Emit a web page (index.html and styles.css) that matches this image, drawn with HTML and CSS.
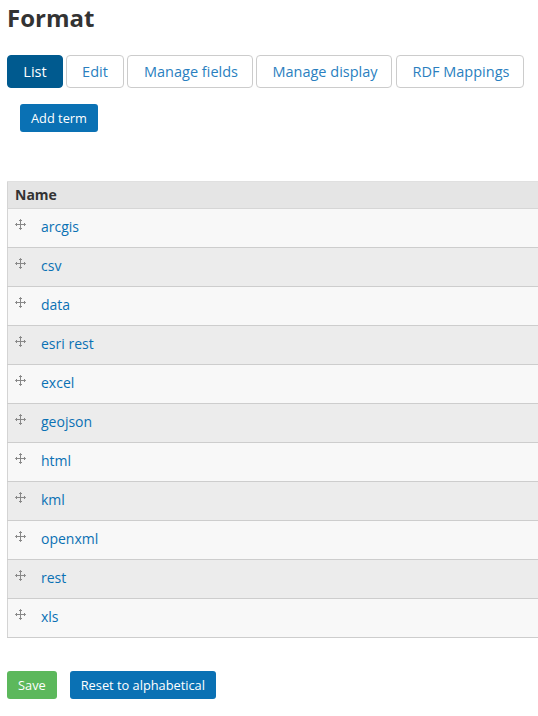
FILE: index.html
```
<!DOCTYPE html>
<html>
<head>
<meta charset="utf-8">
<link rel="stylesheet" href="styles.css">
</head>
<body>
<div class="page">
  <h1 class="title">Format</h1>
  <nav class="tabs">
    <a class="tab active">List</a>
    <a class="tab">Edit</a>
    <a class="tab">Manage fields</a>
    <a class="tab">Manage display</a>
    <a class="tab">RDF Mappings</a>
  </nav>
  <div class="actions">
    <a class="btn btn-primary">Add term</a>
  </div>
  <div class="table-wrap">
    <table class="terms">
      <thead><tr><th>Name</th></tr></thead>
      <tbody>
        <tr><td><span class="drag"><svg width="11" height="11" viewBox="0 0 11 11"><path d="M5.5 0.5v10M0.5 5.5h10M4 2l1.5-1.5L7 2M4 9l1.5 1.5L7 9M2 4L0.5 5.5 2 7M9 4l1.5 1.5L9 7" fill="none" stroke="#888" stroke-width="1"/></svg></span><a>arcgis</a></td></tr>
        <tr><td><span class="drag"><svg width="11" height="11" viewBox="0 0 11 11"><path d="M5.5 0.5v10M0.5 5.5h10M4 2l1.5-1.5L7 2M4 9l1.5 1.5L7 9M2 4L0.5 5.5 2 7M9 4l1.5 1.5L9 7" fill="none" stroke="#888" stroke-width="1"/></svg></span><a>csv</a></td></tr>
        <tr><td><span class="drag"><svg width="11" height="11" viewBox="0 0 11 11"><path d="M5.5 0.5v10M0.5 5.5h10M4 2l1.5-1.5L7 2M4 9l1.5 1.5L7 9M2 4L0.5 5.5 2 7M9 4l1.5 1.5L9 7" fill="none" stroke="#888" stroke-width="1"/></svg></span><a>data</a></td></tr>
        <tr><td><span class="drag"><svg width="11" height="11" viewBox="0 0 11 11"><path d="M5.5 0.5v10M0.5 5.5h10M4 2l1.5-1.5L7 2M4 9l1.5 1.5L7 9M2 4L0.5 5.5 2 7M9 4l1.5 1.5L9 7" fill="none" stroke="#888" stroke-width="1"/></svg></span><a>esri rest</a></td></tr>
        <tr><td><span class="drag"><svg width="11" height="11" viewBox="0 0 11 11"><path d="M5.5 0.5v10M0.5 5.5h10M4 2l1.5-1.5L7 2M4 9l1.5 1.5L7 9M2 4L0.5 5.5 2 7M9 4l1.5 1.5L9 7" fill="none" stroke="#888" stroke-width="1"/></svg></span><a>excel</a></td></tr>
        <tr><td><span class="drag"><svg width="11" height="11" viewBox="0 0 11 11"><path d="M5.5 0.5v10M0.5 5.5h10M4 2l1.5-1.5L7 2M4 9l1.5 1.5L7 9M2 4L0.5 5.5 2 7M9 4l1.5 1.5L9 7" fill="none" stroke="#888" stroke-width="1"/></svg></span><a>geojson</a></td></tr>
        <tr><td><span class="drag"><svg width="11" height="11" viewBox="0 0 11 11"><path d="M5.5 0.5v10M0.5 5.5h10M4 2l1.5-1.5L7 2M4 9l1.5 1.5L7 9M2 4L0.5 5.5 2 7M9 4l1.5 1.5L9 7" fill="none" stroke="#888" stroke-width="1"/></svg></span><a>html</a></td></tr>
        <tr><td><span class="drag"><svg width="11" height="11" viewBox="0 0 11 11"><path d="M5.5 0.5v10M0.5 5.5h10M4 2l1.5-1.5L7 2M4 9l1.5 1.5L7 9M2 4L0.5 5.5 2 7M9 4l1.5 1.5L9 7" fill="none" stroke="#888" stroke-width="1"/></svg></span><a>kml</a></td></tr>
        <tr><td><span class="drag"><svg width="11" height="11" viewBox="0 0 11 11"><path d="M5.5 0.5v10M0.5 5.5h10M4 2l1.5-1.5L7 2M4 9l1.5 1.5L7 9M2 4L0.5 5.5 2 7M9 4l1.5 1.5L9 7" fill="none" stroke="#888" stroke-width="1"/></svg></span><a>openxml</a></td></tr>
        <tr><td><span class="drag"><svg width="11" height="11" viewBox="0 0 11 11"><path d="M5.5 0.5v10M0.5 5.5h10M4 2l1.5-1.5L7 2M4 9l1.5 1.5L7 9M2 4L0.5 5.5 2 7M9 4l1.5 1.5L9 7" fill="none" stroke="#888" stroke-width="1"/></svg></span><a>rest</a></td></tr>
        <tr><td><span class="drag"><svg width="11" height="11" viewBox="0 0 11 11"><path d="M5.5 0.5v10M0.5 5.5h10M4 2l1.5-1.5L7 2M4 9l1.5 1.5L7 9M2 4L0.5 5.5 2 7M9 4l1.5 1.5L9 7" fill="none" stroke="#888" stroke-width="1"/></svg></span><a>xls</a></td></tr>
      </tbody>
    </table>
  </div>
  <div class="form-actions">
    <a class="btn btn-success">Save</a>
    <a class="btn btn-primary">Reset to alphabetical</a>
  </div>
</div>
</body>
</html>
```
FILE: styles.css
```
html, body {
  margin: 0;
  padding: 0;
}
body {
  font-family: "Open Sans", "Liberation Sans", sans-serif;
  color: #333;
  background: #fff;
}
.page {
  padding: 0 0 0 7px;
}
.title {
  margin: 0;
  padding-top: 1px;
  font-size: 24px;
  line-height: 33px;
  font-weight: 700;
  color: #333;
}
.tabs {
  display: flex;
  gap: 3px;
  margin-top: 21px;
}
.tab {
  display: block;
  box-sizing: border-box;
  flex: none;
  white-space: nowrap;
  height: 33px;
  line-height: 31px;
  border: 1px solid #ccc;
  border-radius: 4px;
  font-size: 14.5px;
  color: #2a7fc0;
  background: #fff;
  text-align: center;
}
.tab.active {
  background: #005a8f;
  border-color: #005a8f;
  color: #fff;
}
.tabs .tab:nth-child(1) { width: 56px; }
.tabs .tab:nth-child(2) { width: 58px; }
.tabs .tab:nth-child(3) { width: 126px; padding-left: 2px; }
.tabs .tab:nth-child(4) { width: 136px; padding-left: 2px; }
.tabs .tab:nth-child(5) { width: 128px; margin-left: 1px; padding-left: 2px; }
.actions {
  margin-top: 16px;
  padding-left: 13px;
}
.btn {
  display: inline-block;
  height: 28px;
  line-height: 28px;
  padding: 0 11px;
  border-radius: 3px;
  font-size: 12.8px;
  color: #fff;
}
.btn-primary {
  background: #0a71b4;
}
.btn-success {
  background: #5cb85c;
}
.table-wrap {
  margin-top: 49px;
}
.terms {
  width: 100%;
  border-collapse: collapse;
  border-left: 1px solid #d4d4d4;
  border-top: 1px solid #e0e0e0;
}
.terms th {
  text-align: left;
  background: #e5e5e5;
  font-size: 14px;
  font-weight: 700;
  height: 24px;
  padding: 0 0 2px 7px;
  border-bottom: 1px solid #d6d6d6;
  color: #333;
}
.terms td {
  height: 34px;
  padding: 0 0 4px 7px;
  border-bottom: 1px solid #cdcdcd;
  font-size: 14px;
  background: #f8f8f8;
}
.terms tbody tr:nth-child(even) td {
  background: #ececec;
}
.drag {
  display: inline-block;
  width: 26px;
  vertical-align: -1px;
}
.drag svg {
  display: block;
  position: relative;
  top: -3px;
}
.terms a {
  color: #0a71b4;
}
.form-actions {
  display: flex;
  gap: 13px;
  margin-top: 33px;
}
```
